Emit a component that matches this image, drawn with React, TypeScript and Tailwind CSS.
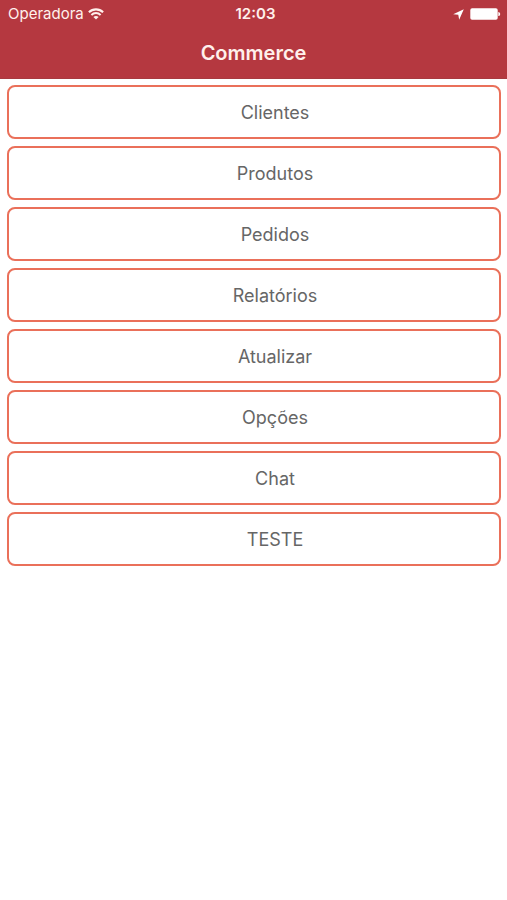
const MENU = [
  "Clientes",
  "Produtos",
  "Pedidos",
  "Relatórios",
  "Atualizar",
  "Opções",
  "Chat",
  "TESTE",
];

function WifiIcon() {
  return (
    <svg className="w-4 h-3" viewBox="0 0 16 12" fill="none" aria-hidden="true">
      <path d="M0.9 4.2C4.8 0.4 11.2 0.4 15.1 4.2" stroke="currentColor" strokeWidth="2.1" />
      <path d="M3.4 6.9C6 4.5 10 4.5 12.6 6.9" stroke="currentColor" strokeWidth="2" />
      <path d="M8 11.6L5.4 9.1C6.8 7.7 9.2 7.7 10.6 9.1Z" fill="currentColor" />
    </svg>
  );
}

function LocationIcon() {
  return (
    <svg className="w-[11px] h-[11px]" viewBox="0 0 10 10" aria-hidden="true">
      <path d="M9.8 0.2L5.6 9.8L4.8 5.2L0.2 4.7Z" fill="currentColor" />
    </svg>
  );
}

function BatteryIcon() {
  return (
    <svg className="w-[31px] h-3" viewBox="0 0 31 12" fill="currentColor" aria-hidden="true">
      <rect x="0.3" y="0.3" width="27.4" height="11.4" rx="1.8" />
      <path d="M28.3 3.9C30.8 4.4 30.8 7.6 28.3 8.1Z" />
    </svg>
  );
}

export default function App() {
  return (
    <div className="min-h-screen bg-white font-['Inter','Liberation_Sans',sans-serif]">
      <header className="bg-[#b53840] text-[#fff0ec] border-b border-[#a83a40]">
        {/* Status bar */}
        <div className="grid grid-cols-3 items-center h-7 pl-2 pr-1 text-[15px] leading-5">
          <div className="flex items-center gap-1">
            <span>Operadora</span>
            <WifiIcon />
          </div>
          <span className="text-center font-semibold">12:03</span>
          <div className="flex items-center justify-end gap-[6px] pr-[2px] text-white">
            <LocationIcon />
            <BatteryIcon />
          </div>
        </div>

        <h1 className="h-[50px] text-center text-xl leading-[50px] font-semibold">Commerce</h1>
      </header>

      <nav className="flex flex-col gap-[7px] pl-[7px] pr-[6px] py-[6px]">
        {MENU.map((label) => (
          <button
            key={label}
            type="button"
            className="h-[54px] rounded-lg border-2 border-[#ea705a] bg-white pl-[42px] pt-[2px] text-center text-lg text-[#666]"
          >
            {label}
          </button>
        ))}
      </nav>
    </div>
  );
}
